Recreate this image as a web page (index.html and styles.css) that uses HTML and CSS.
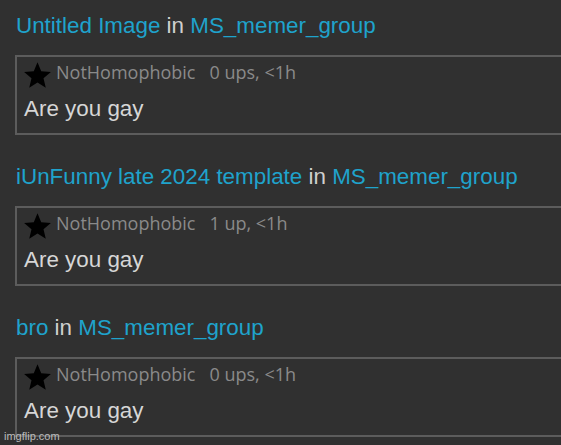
FILE: index.html
```html
<!DOCTYPE html>
<html>
<head>
<meta charset="utf-8">
<link rel="stylesheet" href="styles.css">
</head>
<body>
<div class="feed">
  <div class="item">
    <div class="title"><span class="link">Untitled Image</span> in <span class="link">MS_memer_group</span></div>
    <div class="box">
      <div class="meta">
        <svg class="star" viewBox="-9.6 -10 19.2 18.2"><path d="M0-10L2.64-3.64 9.51-3.09 4.28 1.39 5.88 8.09 0 4.5-5.88 8.09-4.28 1.39-9.51-3.09-2.64-3.64z"/></svg>
        <span class="user">NotHomophobic</span>
        <span class="score">0 ups, &lt;1h</span>
      </div>
      <div class="text">Are you gay</div>
    </div>
  </div>
  <div class="item">
    <div class="title"><span class="link">iUnFunny late 2024 template</span> in <span class="link">MS_memer_group</span></div>
    <div class="box">
      <div class="meta">
        <svg class="star" viewBox="-9.6 -10 19.2 18.2"><path d="M0-10L2.64-3.64 9.51-3.09 4.28 1.39 5.88 8.09 0 4.5-5.88 8.09-4.28 1.39-9.51-3.09-2.64-3.64z"/></svg>
        <span class="user">NotHomophobic</span>
        <span class="score">1 up, &lt;1h</span>
      </div>
      <div class="text">Are you gay</div>
    </div>
  </div>
  <div class="item">
    <div class="title"><span class="link">bro</span> in <span class="link">MS_memer_group</span></div>
    <div class="box">
      <div class="meta">
        <svg class="star" viewBox="-9.6 -10 19.2 18.2"><path d="M0-10L2.64-3.64 9.51-3.09 4.28 1.39 5.88 8.09 0 4.5-5.88 8.09-4.28 1.39-9.51-3.09-2.64-3.64z"/></svg>
        <span class="user">NotHomophobic</span>
        <span class="score">0 ups, &lt;1h</span>
      </div>
      <div class="text">Are you gay</div>
    </div>
  </div>
</div>
<div class="watermark">imgflip.com</div>
</body>
</html>
```

FILE: styles.css
```css
html, body {
  margin: 0;
  padding: 0;
  background: #303030;
  overflow: hidden;
}
body {
  width: 561px;
  height: 445px;
  position: relative;
  font-family: "Liberation Sans", Arial, sans-serif;
}
.feed {
  padding: 13px 0 0 15px;
  display: flex;
  flex-direction: column;
  gap: 29px;
  overflow: hidden;
}
.item {
  display: flex;
  flex-direction: column;
  gap: 16px;
}
.title {
  font-size: 22.4px;
  line-height: 26px;
  color: #cfcfcf;
  padding-left: 1px;
  white-space: nowrap;
}
.link {
  color: #1fa3cc;
}
.box {
  border: 2px solid #5c5c5c;
  margin-right: -30px;
  padding: 6px 8px 9px 7px;
  height: 61px;
}
.meta {
  display: flex;
  align-items: flex-start;
  height: 26px;
  white-space: nowrap;
}
.star {
  width: 27px;
  height: 26px;
  margin-top: -1px;
  fill: #000;
  flex: none;
}
.user,
.score {
  font-family: "Open Sans", sans-serif;
  font-size: 18px;
  line-height: 18px;
  color: #8a8a8a;
}
.user {
  margin-left: 5px;
}
.score {
  margin-left: 14px;
}
.text {
  margin-top: 7px;
  font-size: 22.4px;
  line-height: 26px;
  color: #d6d6d6;
}
.watermark {
  position: absolute;
  left: 4px;
  bottom: 3px;
  font-size: 11px;
  color: #bdbdbd;
  font-family: "Liberation Sans", Arial, sans-serif;
}
```
